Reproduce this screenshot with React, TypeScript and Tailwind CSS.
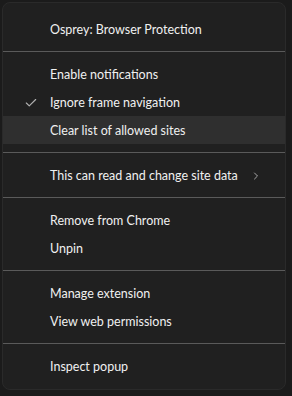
import { Check, ChevronRight } from "lucide-react";

type Item = { label: string; checked?: boolean; hover?: boolean; sub?: boolean };

const groups: Item[][] = [
  [
    { label: "Enable notifications" },
    { label: "Ignore frame navigation", checked: true },
    { label: "Clear list of allowed sites", hover: true },
  ],
  [{ label: "This can read and change site data", sub: true }],
  [{ label: "Remove from Chrome" }, { label: "Unpin" }],
  [{ label: "Manage extension" }, { label: "View web permissions" }],
  [{ label: "Inspect popup" }],
];

function Separator() {
  return <div className="my-2 h-px bg-[#5a5a5a]" />;
}

function Row({ item }: { item: Item }) {
  return (
    <div
      className={`relative flex h-[28px] items-center pl-[47px] pr-4 pt-[2px] ${
        item.hover ? "bg-[#2f2f2f]" : ""
      }`}
    >
      {item.checked && (
        <Check className="absolute left-[21px] h-[14px] w-[14px] text-[#b0b0b0]" strokeWidth={2} />
      )}
      <span className="flex-1 whitespace-nowrap">{item.label}</span>
      {item.sub && <ChevronRight className="mr-[7px] h-[12px] w-[12px] text-[#a8a8a8]" strokeWidth={2} />}
    </div>
  );
}

export default function App() {
  return (
    <div className="h-[396px] w-[292px] overflow-hidden bg-[#1b1b1b] pl-[2px] pt-[2px] font-['Lato',sans-serif] text-[12.5px] text-[#f0f0f0]">
      <div className="h-[388px] w-[284px] overflow-hidden rounded-[8px] border border-[#2a2a2a] bg-[#202020] pt-[12px]">
        <div className="flex h-[28px] items-center pl-[47px] pt-[3px] whitespace-nowrap">Osprey: Browser Protection</div>
        {groups.map((g, i) => (
          <div key={i}>
            <Separator />
            {g.map((item) => (
              <Row key={item.label} item={item} />
            ))}
          </div>
        ))}
      </div>
    </div>
  );
}
